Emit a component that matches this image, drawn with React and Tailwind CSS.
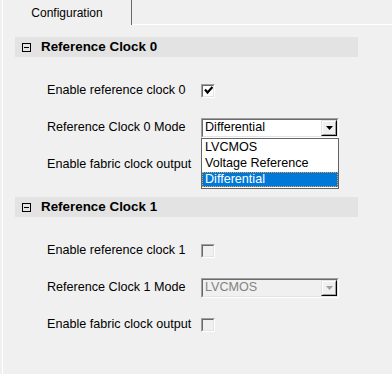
import React from "react";

const FONT = { fontFamily: '"Liberation Sans", Arial, sans-serif' };

function Sunken({ className = "", innerClass = "", children }) {
  return (
    <div className={`border border-t-[#a0a0a0] border-l-[#a0a0a0] border-b-white border-r-white ${className}`}>
      <div className={`border border-t-[#696969] border-l-[#696969] border-b-[#e3e3e3] border-r-[#e3e3e3] w-full h-full ${innerClass}`}>
        {children}
      </div>
    </div>
  );
}

function Checkbox({ checked, bg = "bg-white" }) {
  return (
    <Sunken className="w-[14px] h-[14px]" innerClass={`${bg} flex items-center justify-center`}>
      {checked && (
        <svg width="9" height="9" viewBox="0 0 9 9">
          <path d="M1 3.5 L3.5 6.5 L8.5 1" fill="none" stroke="#000" strokeWidth="2.2" />
        </svg>
      )}
    </Sunken>
  );
}

function DropButton({ disabled }) {
  return (
    <div className="w-[16px] h-[16px] border border-t-[#e3e3e3] border-l-[#e3e3e3] border-b-[#000] border-r-[#000] bg-[#f0f0f0]">
      <div className="w-full h-full border border-t-white border-l-white border-b-[#a0a0a0] border-r-[#a0a0a0] flex items-center justify-center">
        <svg width="7" height="4" viewBox="0 0 7 4">
          <path d="M0 0 H7 L3.5 4 Z" fill={disabled ? "#a0a0a0" : "#000"} />
        </svg>
      </div>
    </div>
  );
}

function Select({ value, disabled }) {
  return (
    <Sunken
      className="w-[138px] h-[20px]"
      innerClass={`${disabled ? "bg-[#f0f0f0]" : "bg-white"} flex items-center justify-between pl-[2px] pr-0`}
    >
      <span className={`text-[12.6px] leading-none ${disabled ? "text-[#838383]" : "text-black"}`}>{value}</span>
      <DropButton disabled={disabled} />
    </Sunken>
  );
}

function Header({ title }) {
  return (
    <div className="w-[343px] h-[20px] bg-[#e3e3e3] flex items-center">
      <div className="ml-[7px] w-[9px] h-[9px] border border-black flex items-center justify-center">
        <div className="w-[5px] h-[1px] bg-black" />
      </div>
      <span className="ml-[10px] text-[13.4px] font-bold text-black leading-none">{title}</span>
    </div>
  );
}

function Row({ label, children }) {
  return (
    <div className="h-[37px] flex items-center relative">
      <span className="ml-[32px] w-[154px] text-[12.6px] text-black leading-none whitespace-nowrap">{label}</span>
      {children}
    </div>
  );
}

export default function App() {
  return (
    <div className="w-[392px] h-[374px] bg-[#f0f0f0] flex flex-col overflow-hidden" style={FONT}>
      <div className="h-[25px] flex shrink-0">
        <div className="ml-[2px] w-[130px] h-[25px] border-l border-white border-r border-r-[#696969] flex items-center justify-center">
          <span className="text-[12px] text-black leading-none">Configuration</span>
        </div>
        <div className="flex-1 h-[25px] border-b border-white" />
      </div>
      <div className="flex-1 ml-[2px] border-l border-white pl-[12px] pt-[12px]">
        <Header title="Reference Clock 0" />
        <div className="mt-[15px]">
          <Row label="Enable reference clock 0">
            <Checkbox checked />
          </Row>
          <Row label="Reference Clock 0 Mode">
            <div className="relative">
              <Select value="Differential" />
              <div className="absolute left-0 top-[20px] w-[138px] bg-white border border-[#646464] py-[1px] z-10">
                <div className="h-[16px] flex items-center pl-[3px] text-[12.6px] text-black">LVCMOS</div>
                <div className="h-[16px] flex items-center pl-[3px] text-[12.6px] text-black">Voltage Reference</div>
                <div className="h-[15px] flex items-center pl-[2px] text-[12.6px] text-white bg-[#0078d7] border border-dotted border-[#f0a040]">Differential</div>
              </div>
            </div>
          </Row>
          <Row label="Enable fabric clock output">
            <Checkbox bg="bg-white" />
          </Row>
        </div>
        <div className="mt-[14px]">
          <Header title="Reference Clock 1" />
        </div>
        <div className="mt-[15px]">
          <Row label="Enable reference clock 1">
            <Checkbox bg="bg-[#f0f0f0]" />
          </Row>
          <Row label="Reference Clock 1 Mode">
            <Select value="LVCMOS" disabled />
          </Row>
          <Row label="Enable fabric clock output">
            <Checkbox bg="bg-[#f0f0f0]" />
          </Row>
        </div>
      </div>
    </div>
  );
}
